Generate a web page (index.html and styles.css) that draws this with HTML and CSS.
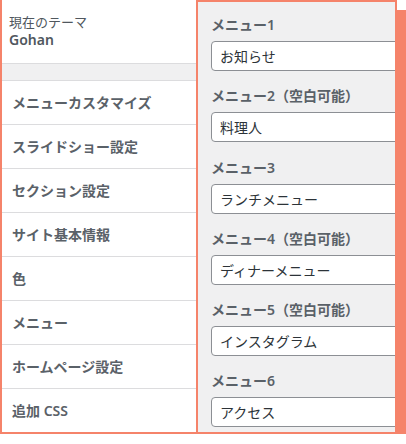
FILE: index.html
```html
<!DOCTYPE html>
<html lang="ja">
<head>
  <meta charset="UTF-8">
  <title>カスタマイズ</title>
  <link rel="stylesheet" href="styles.css">
</head>
<body>
  <div class="frame">
    <div class="sidebar">
      <div class="theme">
        <span class="theme-label">現在のテーマ</span>
        <strong class="theme-name">Gohan</strong>
      </div>
      <div class="spacer"></div>
      <ul class="sections">
        <li>メニューカスタマイズ</li>
        <li>スライドショー設定</li>
        <li>セクション設定</li>
        <li>サイト基本情報</li>
        <li>色</li>
        <li>メニュー</li>
        <li>ホームページ設定</li>
        <li>追加 CSS</li>
      </ul>
    </div>

    <div class="panel">
      <div class="field">
        <label>メニュー1</label>
        <input type="text" value="お知らせ">
      </div>
      <div class="field">
        <label>メニュー2（空白可能）</label>
        <input type="text" value="料理人">
      </div>
      <div class="field">
        <label>メニュー3</label>
        <input type="text" value="ランチメニュー">
      </div>
      <div class="field">
        <label>メニュー4（空白可能）</label>
        <input type="text" value="ディナーメニュー">
      </div>
      <div class="field">
        <label>メニュー5（空白可能）</label>
        <input type="text" value="インスタグラム">
      </div>
      <div class="field">
        <label>メニュー6</label>
        <input type="text" value="アクセス">
      </div>
    </div>
  </div>
</body>
</html>
```

FILE: styles.css
```css
body {
  margin: 0;
  background-color: #fff;
  font-family: "Noto Sans", "Noto Sans CJK JP", sans-serif;
  color: #3c434a;
}
.frame {
  display: flex;
  width: 397px;
  height: 434px;
  box-sizing: border-box;
  border: 2px solid #f5836a;
  border-top: none;
  box-shadow: 10px 10px 0 0 #f5836a;
  background-color: #fff;
  overflow: hidden;
}
.sidebar {
  width: 194px;
  flex-shrink: 0;
  border-right: 2px solid #f5836a;
  background-color: #fff;
}
.theme {
  padding: 13px 7px 14px;
  border-bottom: 1px solid #dcdcde;
}
.theme-label {
  display: block;
  font-size: 13px;
  line-height: 18px;
  color: #50575e;
}
.theme-name {
  display: block;
  font-size: 14px;
  line-height: 18px;
  font-weight: 600;
  color: #50575e;
}
.spacer {
  height: 16px;
  background-color: #f0f0f1;
  border-bottom: 1px solid #dcdcde;
}
.sections {
  list-style: none;
  margin: 0;
  padding: 0;
}
.sections li {
  height: 43px;
  line-height: 43px;
  padding-left: 10px;
  font-size: 14px;
  font-weight: 600;
  color: #5a6168;
  border-bottom: 1px solid #dcdcde;
}
.panel {
  flex: 1;
  padding: 13px 0 0 13px;
  background-color: #f0f0f1;
  border-top: 2px solid #f5836a;
  overflow: hidden;
}
.field {
  margin-bottom: 15.3px;
}
.field label {
  display: block;
  margin-bottom: 6px;
  font-size: 14px;
  line-height: 20px;
  font-weight: 600;
  color: #5a6168;
}
.field input {
  display: block;
  width: 240px;
  height: 30px;
  box-sizing: border-box;
  padding: 0 8px;
  border: 1px solid #8c8f94;
  border-radius: 4px;
  background-color: #fff;
  font-family: inherit;
  font-size: 14px;
  color: #2c3338;
}
```
